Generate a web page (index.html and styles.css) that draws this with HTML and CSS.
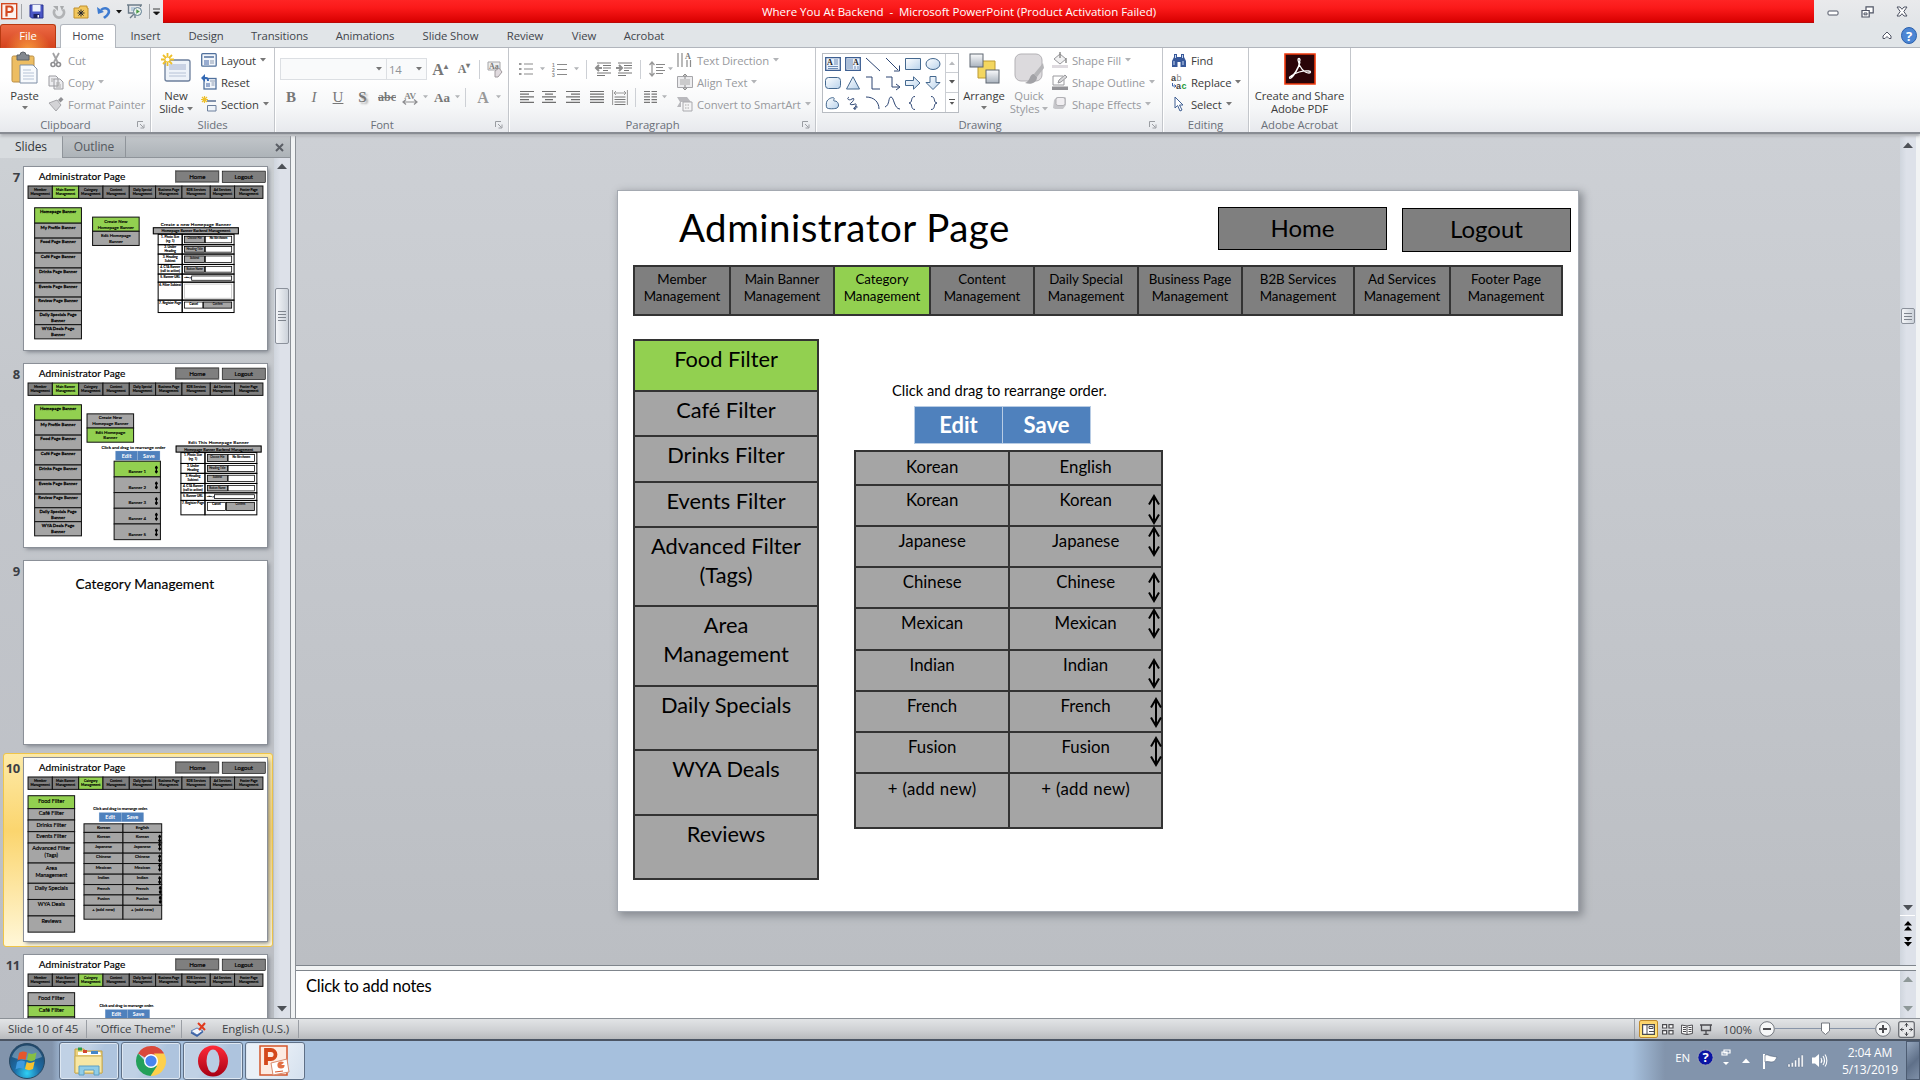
FILE: index.html
```html
<!DOCTYPE html>
<html lang="en">
<head>
<meta charset="utf-8">
<title>Where You At Backend - Microsoft PowerPoint</title>
<link rel="stylesheet" href="styles.css">
</head>
<body>
<svg class="sprite" width="0" height="0">
  <defs>
    <linearGradient id="blueFill" x1="0" y1="0" x2="1" y2="1"><stop offset="0" stop-color="#fff"/><stop offset="1" stop-color="#b9d3ec"/></linearGradient>
    <linearGradient id="greyFill" x1="0" y1="0" x2="0" y2="1"><stop offset="0" stop-color="#fafbfc"/><stop offset="1" stop-color="#a9b2bd"/></linearGradient>
    <radialGradient id="orb" cx=".5" cy=".85" r=".8"><stop offset="0" stop-color="#2fd0f5"/><stop offset=".45" stop-color="#1c6ca6"/><stop offset="1" stop-color="#21486c"/></radialGradient>
    <linearGradient id="operaRed" x1="0" y1="0" x2="0" y2="1"><stop offset="0" stop-color="#ff2a38"/><stop offset="1" stop-color="#a70014"/></linearGradient>
  </defs>
  <symbol id="tri" viewBox="0 0 6 4"><path d="M0 0h6L3 3.6z" fill="currentColor"/></symbol>
  <symbol id="launch" viewBox="0 0 8 8"><path d="M.5 6V.5H6M3 3l3.5 3.5M7 3.5V7H3.5" fill="none" stroke="currentColor"/></symbol>
  <symbol id="dragArrow" viewBox="0 0 12 31"><path class="drag-path" d="M6 2v27M1 10.500 6 2l5 8.500M1 20.500 6 29l5-8.500" fill="none" stroke="#000"/></symbol>
  <symbol id="lines" viewBox="0 0 14 12"><path d="M0 .5h14M0 3.200h9M0 5.900h14M0 8.600h9M0 11.300h14" stroke="#6f6f6f" stroke-width="1.200"/></symbol>
</svg>

<header class="titlebar">
  <div class="qat">
    <svg width="17" height="17" viewBox="0 0 17 17"><rect x=".7" y=".7" width="15" height="15" fill="#fdf3ee" stroke="#d2481f" stroke-width="1.400"/><path d="M5.500 13.500v-10h3.300a2.700 2.700 0 0 1 0 5.500H5.500" fill="none" stroke="#d2481f" stroke-width="2.200"/></svg>
    <i class="vbar"></i>
    <svg class="q-save" width="15" height="15" viewBox="0 0 15 15"><path d="M1 1h13v13H2.500L1 12.500z" fill="#4a56c6" stroke="#2b3590"/><path d="M3.500 1h8v6.500h-8z" fill="#eef2fb"/><path d="M4.500 10h6v4h-6z" fill="#1c2260"/><path d="M8.500 11h1.500v2.500H8.500z" fill="#fff"/></svg>
    <svg class="q-redo" width="14" height="14" viewBox="0 0 14 14"><path d="M3 4.500a5 5 0 1 0 8 0" fill="none" stroke="#b1b3b5" stroke-width="2.800"/><path d="M1 1h5v5zM8 1h4l-2 5z" fill="#a9abad"/></svg>
    <svg class="q-folder" width="16" height="14" viewBox="0 0 16 14"><path d="M1 3h5l1-2h7v2h1v10H1z" fill="#f2c75c" stroke="#c0902c"/><path d="M8 4.500v7M4.500 8h7M5.500 5.500l5 5M10.500 5.500l-5 5" stroke="#24272f"/></svg>
    <svg class="q-undo" width="14" height="14" viewBox="0 0 14 14"><path d="M4 5c5-4 10 0 7 4-1 2-3 3-4 4" fill="none" stroke="#3e7bd0" stroke-width="2.600"/><path d="M0 2l1 7 6-2z" fill="#3e7bd0"/></svg>
    <svg class="q-tri" width="6" height="4"><use href="#tri"/></svg>
    <svg class="q-show" width="16" height="15" viewBox="0 0 16 15"><path d="M0 1h15M1.500 1v8h5M13.500 1v2M7 10l-4 4M8 10v4" fill="none" stroke="#6e7d8a" stroke-width="1.400"/><path d="M4 4h4M4 6h3" stroke="#8fb3cf"/><circle cx="10.500" cy="7.500" r="4" fill="#e8f1ea" stroke="#5f7c92"/><path d="M9.300 5.200v4.600l3.500-2.300z" fill="#4b9a45"/></svg>
    <i class="vbar"></i>
    <svg class="q-more" width="7" height="8" viewBox="0 0 7 8"><path d="M0 1h7M.5 4h6L3.500 7z" fill="#111" stroke="#111" stroke-width=".8"/></svg>
  </div>
  <h1 class="caption">Where You At Backend&nbsp; -&nbsp; Microsoft PowerPoint (Product Activation Failed)</h1>
  <div class="winbtns">
    <svg width="12" height="12" viewBox="0 0 12 12"><rect x="1" y="5" width="10" height="4" rx="1" fill="#fff" stroke="#4f5464"/></svg>
    <svg width="13" height="12" viewBox="0 0 13 12"><path d="M5 .8h7.200v6H5z" fill="#fff" stroke="#4f5464" stroke-width="1.200"/><path d="M1 4.500h7.200v6.500H1z" fill="#fff" stroke="#4f5464" stroke-width="1.200"/><path d="M3 7h3v1.800H3z" fill="none" stroke="#4f5464"/></svg>
    <svg width="12" height="11" viewBox="0 0 12 11"><path d="M1 1h3l2 2.300L8 1h3L7.800 5.500 11 10H8L6 7.700 4 10H1l3.200-4.500z" fill="#fff" stroke="#4f5464"/></svg>
  </div>
</header>

<nav class="tabs">
  <span class="tab file">File</span><span></span><span class="tab active">Home</span><span class="tab">Insert</span><span class="tab">Design</span><span class="tab">Transitions</span><span class="tab">Animations</span><span class="tab">Slide Show</span><span class="tab">Review</span><span class="tab">View</span><span class="tab">Acrobat</span>
  <div class="tab-help">
    <svg width="10" height="9" viewBox="0 0 10 9"><path d="M1 7.500V5L5 1l4 4v2.500H7L5 5.500l-2 2z" fill="#fff" stroke="#4f5464"/></svg>
    <svg width="16" height="17" viewBox="0 0 16 17"><ellipse cx="8" cy="8.500" rx="7.500" ry="8" fill="#4c86d4" stroke="#2c61ad"/><text x="8" y="13.500" text-anchor="middle" class="q-mark">?</text></svg>
  </div>
</nav>

<section class="ribbon">
  <div class="group g-clip">
    <div class="tools">
      <div class="big"><svg width="28" height="32" viewBox="0 0 28 32"><rect x="1" y="3" width="22" height="26" rx="1.500" fill="#edbd62" stroke="#b98d45"/><path d="M6 2h3a3 3 0 0 1 6 0h3v5H6z" fill="#83888f" stroke="#5d6268"/><path d="M9 12h13l4 4v14H9z" fill="#f7fafd" stroke="#7f8fa6"/><path d="M12 17h8M12 20h11M12 23h11M12 26h11" stroke="#b6c3d6"/></svg><span>Paste</span><svg class="tri" width="6" height="4"><use href="#tri"/></svg></div>
      <div class="stack off">
        <div><svg width="16" height="16" viewBox="0 0 16 16"><path d="M5 1l5 10M11 1L6 10" stroke="#a2a2a4" stroke-width="1.800"/><circle cx="5" cy="12.500" r="2" fill="none" stroke="#8d8d90" stroke-width="1.600"/><circle cx="10.500" cy="12.500" r="2" fill="none" stroke="#8d8d90" stroke-width="1.600"/></svg><span>Cut</span></div>
        <div><svg width="16" height="16" viewBox="0 0 16 16"><path d="M1 2h7l2 2v8H1zM6 5h6l3 3v7H6z" fill="#ededf0" stroke="#9b9ba0"/><path d="M8 9h4M8 11h5M8 13h5M3 5h3M3 7h2" stroke="#aaa"/></svg><span>Copy</span><svg class="tri" width="6" height="4"><use href="#tri"/></svg></div>
        <div><svg width="16" height="16" viewBox="0 0 16 16"><path d="M10 4l3-3 2.500 2.500-3 3z" fill="#8f8f93"/><path d="M1 7l8-3 4 5-5 6z" fill="#d3d3d6" stroke="#a6a6aa"/></svg><span>Format Painter</span></div>
      </div>
    </div>
    <footer>Clipboard<svg width="8" height="8"><use href="#launch"/></svg></footer>
  </div>
  <div class="group g-slides">
    <div class="tools">
      <div class="big"><svg width="30" height="32" viewBox="0 0 30 32"><rect x="4" y="7" width="25" height="21" rx="2" fill="#eef3f9" stroke="#6c7f9c" stroke-width="1.300"/><path d="M8 11h17v6H8z" fill="#c9d2e4"/><path d="M8 20h17M8 23h17" stroke="#b6c2d6"/><path d="M6.500 0v13M0 6.500h13M2 2l9 9M11 2l-9 9" stroke="#eec02c" stroke-width="1.800"/><circle cx="6.500" cy="6.500" r="2" fill="#fff"/></svg><span>New</span><span>Slide <svg class="tri" width="6" height="4"><use href="#tri"/></svg></span></div>
      <div class="stack">
        <div><svg width="16" height="14" viewBox="0 0 16 14"><rect x=".7" y=".7" width="14.500" height="12.500" rx="1" fill="#f2f6fb" stroke="#50709c" stroke-width="1.300"/><path d="M3 3h10v2H3z" fill="#7b93b6"/><path d="M3 7h5v5H3z" fill="#98acd0"/><path d="M9 8h4M9 10h4" stroke="#8c9ab0"/></svg><span>Layout</span><svg class="tri" width="6" height="4"><use href="#tri"/></svg></div>
        <div><svg width="16" height="16" viewBox="0 0 16 16"><rect x="3" y="4.500" width="12" height="10.500" fill="#f2f6fb" stroke="#50709c" stroke-width="1.300"/><path d="M5 9h4v4H5z" fill="#98acd0"/><path d="M10.500 9h3M10.500 11h3M9 7h5" stroke="#8c9ab0"/><path d="M2 4h3c2 0 2 1 2 3" fill="none" stroke="#3469b4" stroke-width="2"/><path d="M0 4l4-4v8z" fill="#3469b4"/></svg><span>Reset</span></div>
        <div><svg width="16" height="16" viewBox="0 0 16 16"><path d="M6 5h9" stroke="#8292ac" stroke-width="2"/><path d="M6.500 9.500h8.500V15H6.500z" fill="#eef3f9" stroke="#6c7f9c"/><path d="M3.500 0v7M0 3.500h7M1 1l5 5M6 1L1 6" stroke="#eec02c" stroke-width="1.200"/></svg><span>Section</span><svg class="tri" width="6" height="4"><use href="#tri"/></svg></div>
      </div>
    </div>
    <footer>Slides</footer>
  </div>
  <div class="group g-font">
    <div class="tools rows">
      <div class="frow1">
        <div class="combo"><svg class="tri" width="6" height="4"><use href="#tri"/></svg></div>
        <div class="combo size"><span>14</span><svg class="tri" width="6" height="4"><use href="#tri"/></svg></div>
        <span class="ser f16">A<sup>▴</sup></span><span class="ser f13">A<sup>▾</sup></span><i class="vbar"></i>
        <svg width="16" height="17" viewBox="0 0 16 17"><path d="M1 1h12v8H1z" fill="#eee" stroke="#a5a5a8"/><text x="2" y="8" class="tinyc">Aa</text><path d="M8 10l4-3 3 4-4 5H8z" fill="#e0dade" stroke="#a09a9e"/></svg>
      </div>
      <div class="frow2">
        <b class="ser">B</b><i class="ser">I</i><u class="ser">U</u><b class="ser shade">S</b><s class="ser abc">abc</s>
        <svg width="17" height="15" viewBox="0 0 17 15"><text x="8" y="8.500" text-anchor="middle" class="av">AV</text><path d="M1 12h14M4 9.500L1 12l3 2.500M12 9.500l3 2.500-3 2.500" fill="none" stroke="#8d8d90" stroke-width="1.200"/></svg>
        <svg class="tri" width="5" height="4"><use href="#tri"/></svg><span class="ser aa">Aa</span><svg class="tri" width="5" height="4"><use href="#tri"/></svg><i class="vbar"></i><span class="ser acol">A</span><svg class="tri" width="5" height="4"><use href="#tri"/></svg>
      </div>
    </div>
    <footer>Font<svg width="8" height="8"><use href="#launch"/></svg></footer>
  </div>
  <div class="group g-para">
    <div class="tools">
      <div class="rows">
        <div class="prow1">
          <svg width="14" height="14" viewBox="0 0 14 14"><path d="M5 2h9M5 7h9M5 12h9" stroke="#8a8a8a"/><path d="M0 1h2.500v2H0zM0 6h2.500v2H0zM0 11h2.500v2H0z" fill="#9a9a9a"/></svg><svg class="tri" width="5" height="4"><use href="#tri"/></svg>
          <svg width="15" height="15" viewBox="0 0 15 15"><path d="M5 2.500h10M5 7.500h10M5 12.500h10" stroke="#8a8a8a"/><text y="4.500" class="num">1</text><text y="9.500" class="num">2</text><text y="14.500" class="num">3</text></svg><svg class="tri" width="5" height="4"><use href="#tri"/></svg>
          <i class="vbar"></i>
          <svg width="16" height="14" viewBox="0 0 16 14"><path d="M2 1h14M8 3.500h8M8 6h8M8 8.500h5M2 11h14M2 13.500h8" stroke="#777"/><path d="M7 6H1M4 3L1 6l3 3" fill="none" stroke="#8f8f8f" stroke-width="2"/></svg>
          <svg width="16" height="14" viewBox="0 0 16 14"><path d="M2 1h14M8 3.500h8M8 6h8M8 8.500h5M2 11h14M2 13.500h8" stroke="#777"/><path d="M0 6h6M3 3l3 3-3 3" fill="none" stroke="#8f8f8f" stroke-width="2"/></svg>
          <i class="vbar"></i>
          <svg width="16" height="16" viewBox="0 0 16 16"><path d="M7 3.500h9M7 6.500h7M7 9.500h9M7 12.500h7" stroke="#888"/><path d="M3 1v14M.5 4L3 1l2.500 3M.5 12L3 15l2.500-3" fill="none" stroke="#999" stroke-width="1.300"/></svg><svg class="tri" width="5" height="4"><use href="#tri"/></svg>
        </div>
        <div class="prow2">
          <svg width="14" height="12"><use href="#lines"/></svg>
          <svg width="14" height="12" viewBox="0 0 14 12"><path d="M0 .5h14M3 3.200h8M0 5.900h14M3 8.600h8M0 11.300h14" stroke="#6f6f6f" stroke-width="1.200"/></svg>
          <svg width="14" height="12" viewBox="0 0 14 12"><path d="M0 .5h14M5 3.200h9M0 5.900h14M5 8.600h9M0 11.300h14" stroke="#6f6f6f" stroke-width="1.200"/></svg>
          <svg width="14" height="12" viewBox="0 0 14 12"><path d="M0 .5h14M0 3.200h14M0 5.900h14M0 8.600h14M0 11.300h14" stroke="#6f6f6f" stroke-width="1.200"/></svg>
          <svg width="16" height="15" viewBox="0 0 16 15"><path d="M.6 0v15M15.400 0v15" stroke="#999"/><path d="M2 3h12M4 1L2 3l2 2M12 1l2 2-2 2" fill="none" stroke="#999"/><path d="M2.500 7h11M2.500 9.500h11M2.500 12h11M2.500 14.500h11" stroke="#777"/></svg>
          <i class="vbar"></i>
          <svg width="13" height="12" viewBox="0 0 13 12"><path d="M0 .5h6M7.500.5H13M0 3.200h6M7.500 3.200H13M0 5.900h6M7.500 5.900H13M0 8.600h6M7.500 8.600H13M0 11.300h6M7.500 11.300H13" stroke="#777" stroke-width="1.200"/></svg><svg class="tri" width="5" height="4"><use href="#tri"/></svg>
        </div>
      </div>
      <div class="stack off">
        <div><svg width="16" height="16" viewBox="0 0 16 16"><path d="M1 1v14M5 1v14M10 8v7M13.500 8v7" stroke="#8c8c8c" stroke-width="1.200"/><text x="8" y="7" class="tinyc">A</text></svg><span>Text Direction</span><svg class="tri" width="6" height="4"><use href="#tri"/></svg></div>
        <div><svg width="16" height="16" viewBox="0 0 16 16"><path d="M.5 2.500h15v11H.5z" fill="#ececee" stroke="#a6a6aa"/><path d="M3 6h10M3 8h10M3 10h10" stroke="#aaa"/><path d="M8 0v5M8 16v-5M6 2l2-2 2 2M6 14l2 2 2-2" fill="none" stroke="#8c8c8c"/></svg><span>Align Text</span><svg class="tri" width="6" height="4"><use href="#tri"/></svg></div>
        <div><svg width="16" height="16" viewBox="0 0 16 16"><path d="M0 1h10l4 5H4v5H0l3-5z" fill="#b9b9bd"/><path d="M6 6h9v9H6z" fill="#f4f4f5" stroke="#a9a9ad"/><path d="M8 9h5M8 12h5" stroke="#aaa" stroke-dasharray="1.500 1"/></svg><span>Convert to SmartArt</span><svg class="tri" width="6" height="4"><use href="#tri"/></svg></div>
      </div>
    </div>
    <footer>Paragraph<svg width="8" height="8"><use href="#launch"/></svg></footer>
  </div>
  <div class="group g-draw">
    <div class="tools">
      <div class="gallery">
        <div class="shapes">
          <svg viewBox="0 0 16 14"><path class="box" d="M.7.7h14.600v12.600H.7z"/><path d="M9 3h4M9 5h4M9 7h4M3 9.500h10M3 11.500h10" stroke="#6d8cb8"/><text x="2" y="8" class="tinyb">A</text></svg>
          <svg viewBox="0 0 16 14"><path class="box" d="M.7.7h14.600v12.600H.7z"/><path d="M3 2v10M5 2v10M7 2v10M10 9v3M13 9v3" stroke="#6d8cb8"/><text x="8" y="8" class="tinyb">A</text></svg>
          <svg viewBox="0 0 16 14"><path d="M1 1l14 13"/></svg>
          <svg viewBox="0 0 16 14"><path d="M1 1l12 12M14.500 8.500v5.500H9"/></svg>
          <svg viewBox="0 0 16 14"><path class="fl" d="M.5 1.500h15v11H.5z"/></svg>
          <svg viewBox="0 0 16 14"><ellipse class="fl" cx="8" cy="7" rx="7" ry="5.500"/></svg>
          <svg viewBox="0 0 16 14"><rect class="fl" x=".5" y="1.500" width="15" height="11" rx="3"/></svg>
          <svg viewBox="0 0 16 14"><path class="fl" d="M8 .8L14.500 13h-13z"/></svg>
          <svg viewBox="0 0 16 14"><path d="M1 1h6v12h8"/></svg>
          <svg viewBox="0 0 16 14"><path d="M1 1h6v10h7M11 8l4 3-4 3"/></svg>
          <svg viewBox="0 0 16 14"><path class="fl" d="M.5 4.500h8V.8L15 7l-6.500 6.200V9.500h-8z"/></svg>
          <svg viewBox="0 0 16 14"><path class="fl" d="M5 .5h6v6h4L8 13.500 1 6.500h4z"/></svg>
          <svg viewBox="0 0 16 14"><path class="fl" d="M2 5c2-3 6-4 7-3s-2 3 1 3 5 5 2 7c-2 1-9 1-10 0s-1-5 0-7z"/></svg>
          <svg viewBox="0 0 16 14"><path d="M4 1c-3 2 0 4 3 2s2 2-1 4 2 2 4 1 1 3-1 4 3 1 3-1-3 0-2 3"/></svg>
          <svg viewBox="0 0 16 14"><path d="M1 1c8 0 13 5 13 12"/></svg>
          <svg viewBox="0 0 16 14"><path d="M0 11C5 9 3 1 6 1s3 12 9 12"/></svg>
          <svg viewBox="0 0 16 14"><path d="M10 .5C5 .5 8 7 4 7c4 0 1 6.500 6 6.500"/></svg>
          <svg viewBox="0 0 16 14"><path d="M6 .5C11 .5 8 7 12 7 8 7 11 13.500 6 13.500"/></svg>
        </div>
        <div class="gscroll"><span class="dim"><svg width="6" height="4"><use href="#tri"/></svg></span><span><svg width="6" height="4"><use href="#tri"/></svg></span><span class="more"><svg width="6" height="4"><use href="#tri"/></svg></span></div>
      </div>
      <div class="big arrange"><svg width="31" height="32" viewBox="0 0 31 32"><path d="M9 8h17v17H9z" fill="#f3d65f" stroke="#bd9a33"/><rect x="1" y="1" width="13" height="13" fill="url(#greyFill)" stroke="#5e6670"/><rect x="17" y="17" width="13" height="13" fill="url(#greyFill)" stroke="#5e6670"/></svg><span>Arrange</span><svg class="tri" width="6" height="4"><use href="#tri"/></svg></div>
      <div class="big off quick"><svg width="30" height="32" viewBox="0 0 30 32"><rect x="1" y="1" width="27" height="27" rx="6" fill="#dcdadd" stroke="#b3b1b5"/><path d="M29 10l-9 11 3 3 7-9z" fill="#b5b5b8"/><path d="M20 21c-5 0-3 7-9 9 6 2 12 0 12-6z" fill="#a2a2a6"/></svg><span>Quick</span><span>Styles <svg class="tri" width="6" height="4"><use href="#tri"/></svg></span></div>
      <div class="stack off">
        <div><svg width="16" height="16" viewBox="0 0 16 16"><path d="M2 7l6-5 6 5-6 5z" fill="#f1f1f2" stroke="#97979b"/><path d="M8 0v6M14 6v5" stroke="#888" stroke-width="1.400"/><path d="M0 13h16v3H0z" fill="#dedadf"/></svg><span>Shape Fill</span><svg class="tri" width="6" height="4"><use href="#tri"/></svg></div>
        <div><svg width="16" height="16" viewBox="0 0 16 16"><path d="M11 2H1v9h11V6" fill="none" stroke="#9a9a9e"/><path d="M6 9l1-3 6-5 2 2-6 5z" fill="#d8d8da" stroke="#97979b"/><path d="M0 12.500h16V16H0z" fill="#929296"/></svg><span>Shape Outline</span><svg class="tri" width="6" height="4"><use href="#tri"/></svg></div>
        <div><svg width="16" height="16" viewBox="0 0 16 16"><path d="M2 4l3-3h8l1 1v7l-3 4H3l-2-1z" fill="#c6c6ca"/><rect x="4" y="1.500" width="9" height="8" rx="2" fill="#f0eef1" stroke="#b0b0b4"/></svg><span>Shape Effects</span><svg class="tri" width="6" height="4"><use href="#tri"/></svg></div>
      </div>
    </div>
    <footer>Drawing<svg width="8" height="8"><use href="#launch"/></svg></footer>
  </div>
  <div class="group g-edit">
    <div class="tools">
      <div class="stack">
        <div><svg width="16" height="15" viewBox="0 0 16 15"><path d="M3 1h3v3h4V1h3v3l2 4v6H9.500V9h-3v5H1V8l2-4z" fill="#37589a"/><path d="M3 8v4M12 8v4M4.500 2v3M11.500 2v3" stroke="#c9d8f0"/></svg><span>Find</span></div>
        <div><svg width="16" height="16" viewBox="0 0 16 16"><text x="0" y="7" class="rep1">a</text><text x="5.500" y="7" class="rep2">b</text><text x="5" y="15" class="rep1">a</text><text x="10.500" y="15" class="rep3">c</text><path d="M1.500 9v3H5M3.500 10.500L5 12l-1.500 1.500" fill="none" stroke="#3c62a8"/></svg><span>Replace</span><svg class="tri" width="6" height="4"><use href="#tri"/></svg></div>
        <div><svg width="16" height="16" viewBox="0 0 16 16"><path d="M4 1v11l2.600-2.500L9 15l2-1-2.500-5H12z" fill="#fff" stroke="#3f5f93"/></svg><span>Select</span><svg class="tri" width="6" height="4"><use href="#tri"/></svg></div>
      </div>
    </div>
    <footer>Editing</footer>
  </div>
  <div class="group g-acro">
    <div class="tools">
      <div class="big"><svg width="32" height="32" viewBox="0 0 32 32"><path d="M1 1h30v30H1z" fill="#2a0408" stroke="#f0380c" stroke-width="1.600"/><path d="M6 24c3-1 9-8 10-17 0-2-2-2-2 0 1 7 6 13 11 13 2 0 2-2 0-2-6-1-14 2-18 5-2 1-2 3 0 2 3-2 8-11 9-16" fill="none" stroke="#fff" stroke-width="1.300"/></svg><span>Create and Share</span><span>Adobe PDF</span></div>
    </div>
    <footer>Adobe Acrobat</footer>
  </div>
</section>

<main class="work">
  <aside class="pane">
    <div class="ptabs"><span class="on">Slides</span><span>Outline</span><svg width="9" height="9" viewBox="0 0 9 9"><path d="M1 1l7 7M8 1L1 8" stroke="#5b5f66" stroke-width="2"/></svg></div>
    <div class="plist">
      <ol class="thumbs">
        <li><b>7</b><div class="thumb" data-slide="banner-create"></div></li>
        <li><b>8</b><div class="thumb" data-slide="banner-edit"></div></li>
        <li><b>9</b><div class="thumb" data-slide="divider"></div></li>
        <li class="sel"><b>10</b><div class="thumb" data-slide="food"></div></li>
        <li><b>11</b><div class="thumb" data-slide="cafe"></div></li>
      </ol>
      <div class="vscroll"><svg width="10" height="6" viewBox="0 0 10 6"><path d="M0 6h10L5 .5z" fill="#4d5157"/></svg><i class="knob"></i><svg width="10" height="6" viewBox="0 0 10 6"><path d="M0 0h10L5 5.500z" fill="#4d5157"/></svg></div>
    </div>
  </aside>
  <div class="editor">
    <div class="canvas-row">
      <div class="canvas">
        <article class="slide" id="current">
          <div class="s-head"><h2>Administrator Page</h2><span class="btn">Home</span><span class="btn lower">Logout</span></div>
          <div class="s-nav"><span>Member<br>Management</span><span>Main Banner<br>Management</span><span class="on">Category<br>Management</span><span>Content<br>Management</span><span>Daily Special<br>Management</span><span>Business Page<br>Management</span><span>B2B Services<br>Management</span><span>Ad Services<br>Management</span><span>Footer Page<br>Management</span></div>
          <div class="s-body">
            <div class="s-side"><span class="on">Food Filter</span><span>Café Filter</span><span>Drinks Filter</span><span>Events Filter</span><span>Advanced Filter<br>(Tags)</span><span>Area<br>Management</span><span>Daily Specials</span><span>WYA Deals</span><span>Reviews</span></div>
            <div class="s-main">
              <p>Click and drag to rearrange order.</p>
              <div class="pair"><b>Edit</b><b>Save</b></div>
              <div class="words">
                <span class="wh">Korean</span><span class="wh">English</span>
                <span>Korean</span><span>Korean<svg class="a1"><use href="#dragArrow"/></svg></span>
                <span>Japanese</span><span>Japanese<svg class="a2"><use href="#dragArrow"/></svg></span>
                <span>Chinese</span><span>Chinese<svg class="a3"><use href="#dragArrow"/></svg></span>
                <span>Mexican</span><span>Mexican<svg class="a4"><use href="#dragArrow"/></svg></span>
                <span>Indian</span><span>Indian<svg class="a5"><use href="#dragArrow"/></svg></span>
                <span>French</span><span>French<svg class="a6"><use href="#dragArrow"/></svg></span>
                <span>Fusion</span><span>Fusion<svg class="a7"><use href="#dragArrow"/></svg></span>
                <span class="add">+ (add new)</span><span class="add">+ (add new)</span>
              </div>
            </div>
          </div>
        </article>
      </div>
      <div class="vscroll wide"><svg width="10" height="6" viewBox="0 0 10 6"><path d="M0 6h10L5 .5z" fill="#4d5157"/></svg><i class="knob"></i><svg width="10" height="6" viewBox="0 0 10 6"><path d="M0 0h10L5 5.500z" fill="#4d5157"/></svg><div class="jump"><svg width="8" height="10" viewBox="0 0 8 10"><path d="M0 4.500h8L4 0zM0 9.500h8L4 5z"/></svg><svg width="8" height="10" viewBox="0 0 8 10"><path d="M0 0h8L4 4.500zM0 5h8L4 9.500z"/></svg></div></div>
    </div>
    <div class="notes-row"><div class="notes">Click to add notes</div><div class="vscroll faded"><svg width="10" height="6" viewBox="0 0 10 6"><path d="M0 6h10L5 .5z" fill="#8e9898"/></svg><svg width="10" height="6" viewBox="0 0 10 6"><path d="M0 0h10L5 5.500z" fill="#8e9898"/></svg></div></div>
  </div>
</main>

<footer class="status">
  <span class="st1">Slide 10 of 45</span><span class="st2">"Office Theme"</span>
  <span class="st3"><svg width="17" height="15" viewBox="0 0 17 15"><path d="M1 9l6-3 6 3-6 4z" fill="#f3f6fb" stroke="#5d7fb8"/><path d="M1 10.500l6 3.500 6-4.500" fill="none" stroke="#3b62a6" stroke-width="1.500"/><path d="M8 1l7 7M15 1L9 8" stroke="#e03a1e" stroke-width="2"/></svg></span><span class="st4">English (U.S.)</span>
  <div class="views">
    <i class="cur"><svg width="13" height="11" viewBox="0 0 13 11"><path d="M.6.6h11.800v9.800H.6z" fill="#fff" stroke="#4c4c50" stroke-width="1.200"/><path d="M5 0v11M7 2.500h4v2H7zM7 7.500h5" fill="none" stroke="#4c4c50"/></svg></i>
    <svg width="12" height="11" viewBox="0 0 12 11"><path d="M.6.6h4v3.400h-4zM7 .6h4v3.400H7zM.6 6.600h4V10h-4zM7 6.600h4V10H7z" fill="#fff" stroke="#4c4c50" stroke-width="1.200"/></svg>
    <svg width="12" height="11" viewBox="0 0 12 11"><path d="M.6 1L6 2l5.400-1v8.500L6 10.500.6 9.500zM6 2v8.500M2 3.500h3M2 5.500h3M2 7.500h3M7.500 3.500h3M7.500 5.500h3M7.500 7.500h3" fill="#fff" stroke="#4c4c50"/></svg>
    <svg width="12" height="11" viewBox="0 0 12 11"><path d="M0 1h12M1.500 1v5.500h9V1M6 6.500V10M3.500 10.300h5" fill="none" stroke="#4c4c50" stroke-width="1.300"/></svg>
    <span class="pct">100%</span>
    <svg class="zoomer" width="132" height="18" viewBox="0 0 132 18"><path d="M16 8.500h100" stroke="#8995a8"/><circle cx="8" cy="9" r="7.300" fill="#f6f7f8" stroke="#73777e"/><path d="M4 9h8" stroke="#4c4c50" stroke-width="2"/><circle cx="124" cy="9" r="7.300" fill="#f6f7f8" stroke="#73777e"/><path d="M120 9h8M124 5v8" stroke="#4c4c50" stroke-width="2"/><path d="M62.500 3h8v8l-4 3.500-4-3.500z" fill="#fff" stroke="#73777e"/></svg>
    <svg width="17" height="17" viewBox="0 0 17 17"><rect x=".7" y=".7" width="15.600" height="15.600" rx="2" fill="#e6e7e9" stroke="#6c6f75" stroke-width="1.300"/><path d="M8.500 2v4M8.500 11v4M2 8.500h4M11 8.500h4M7 4.500l1.500-2 1.500 2M7 12.500l1.500 2 1.500-2M4.500 7l-2 1.500 2 1.500M12.500 7l2 1.500-2 1.500" fill="none" stroke="#45474c"/></svg>
  </div>
</footer>

<div class="taskbar">
  <svg class="orb" width="38" height="38" viewBox="0 0 38 38"><circle cx="19" cy="19" r="17.500" fill="url(#orb)" stroke="#274862"/><path d="M4 15A15.500 15.500 0 0 1 34 15C25 19 13 19 4 15z" fill="#b5cbdc" opacity=".45"/><path d="M11 11c3-2 5-2 8-.5l-1.500 7.500c-3-1.500-5-1-8 .5z" fill="#e4572c"/><path d="M20.500 11c3 1.500 5 1 8-.5L27 18c-3 1.500-5 1.500-8 0z" fill="#86bf44"/><path d="M9 20c3-1.500 5-2 8-.5L15.500 27c-3-1.500-5-1-8 .5z" fill="#3f9ade"/><path d="M18.700 20c3 1.500 5 1 8-.5L25 27c-3 1.500-5 1.500-8 0z" fill="#f6c22f"/></svg>
  <div class="tb"><svg width="34" height="34" viewBox="0 0 34 34"><path d="M3 5h9l1 2h17v22H3z" fill="#ecd380" stroke="#c2a042"/><path d="M6 8h22l1 3H6z" fill="#fff"/><path d="M6 3.500h4v3H6z" fill="#2c9c48"/><path d="M11 6h4v3h-4z" fill="#d3452f"/><path d="M19 7h7v3h-7z" fill="#4386c8"/><path d="M3 12h27v17H3z" fill="#f7e7a4" stroke="#ccae55"/><path d="M7 31v-9h20v9h-5v-5H12v5z" fill="#8fcde8" stroke="#5d9fc4"/></svg></div>
  <div class="tb"><svg width="32" height="32" viewBox="0 0 32 32"><path d="M16 16L3 8.500A15 15 0 0 1 29 8.500z" fill="#d9483b"/><path d="M16 1a15 15 0 0 1 13 7.500H16z" fill="#d9483b"/><path d="M29 8.500A15 15 0 0 1 15.500 31L22 16l-3-7.500z" fill="#fdd04c"/><path d="M3 8.500A15 15 0 0 0 15.500 31l6.500-10L10 16z" fill="#23a05a"/><circle cx="16" cy="16" r="7" fill="#fff"/><circle cx="16" cy="16" r="5.600" fill="#4a85ee"/></svg></div>
  <div class="tb"><svg width="32" height="32" viewBox="0 0 32 32"><ellipse cx="16" cy="16" rx="15" ry="15.500" fill="url(#operaRed)"/><ellipse cx="16" cy="16" rx="6.500" ry="11.500" fill="#b9cde4"/></svg></div>
  <div class="tb front"><svg width="32" height="32" viewBox="0 0 32 32"><rect x="2" y="1" width="27" height="29" fill="#fdebe2" stroke="#d4552b" stroke-width="1.500"/><path d="M8 20V5h5a4.500 4.500 0 0 1 0 9H8" fill="none" stroke="#d4481b" stroke-width="3.800"/><path d="M13 18l16-4 2 13-16 3z" fill="#fff" stroke="#d98b6e"/><circle cx="23" cy="20" r="3.600" fill="#e26f45"/><path d="M23 20h4v-3z" fill="#fff"/><path d="M17 27l8-1" stroke="#d4552b"/></svg></div>
  <div class="tray">
    <span class="en">EN</span>
    <svg class="t-help" width="17" height="17" viewBox="0 0 17 17"><circle cx="8.500" cy="8.500" r="7.700" fill="#0a15a4" stroke="#9fa6b4"/><text x="8.500" y="13" text-anchor="middle" class="q-mark">?</text></svg>
    <svg class="t-win" width="10" height="18" viewBox="0 0 10 18"><path d="M3 1h6v3H3zM1 3h5v3H1z" fill="#8294ae" stroke="#fff" stroke-width="1.200"/><path d="M2 13h6l-3 3z" fill="#fff"/></svg>
    <svg class="t-up" width="8" height="6" viewBox="0 0 8 6"><path d="M0 5h8L4 .5z" fill="#fff"/></svg>
    <svg class="t-flag" width="16" height="16" viewBox="0 0 16 16"><path d="M2 1v15" stroke="#fff" stroke-width="2"/><path d="M3 2c3-1 4 1 6 1l6 1c-1 2-2 5-5 5S6 8 3 9z" fill="#fff" stroke="#4f6078" stroke-width=".6"/></svg>
    <svg class="t-sig" width="17" height="13" viewBox="0 0 17 13"><path d="M1 10h2v3H1zM4.300 8.500h2V13h-2zM7.600 6h2v7h-2zM10.900 3.500h2V13h-2zM14.200 1h2v12h-2z" fill="#fff" stroke="#5b6c85" stroke-width=".4"/></svg>
    <svg class="t-snd" width="17" height="15" viewBox="0 0 17 15"><path d="M1 4.500h3L8 1v13l-4-3.500H1z" fill="#fff"/><path d="M10 5c1 1.500 1 3.500 0 5M12 3c2 3 2 6 0 9M14 1.500c2.500 3.500 2.500 8.500 0 12" fill="none" stroke="#fff" stroke-width="1.100"/></svg>
    <div class="clock"><span>2:04 AM</span><span>5/13/2019</span></div>
    <i class="peek"></i>
  </div>
</div>

<template id="tpl-banner-side"><div class="bn-side"><span class="on">Homepage Banner</span><span>My Profile Banner</span><span>Food Page Banner</span><span>Café Page Banner</span><span>Drinks Page Banner</span><span>Events Page Banner</span><span>Review Page Banner</span><span>Daily Specials Page Banner</span><span>WYA Deals Page Banner</span></div></template>
<template id="tpl-form"><div class="bn-form"><p></p><h4>Homepage Banner Backend Management</h4><div class="rowsf">
  <span>1. Photo Size (eg. 1)</span><div><em>Choose File</em><q>No file chosen</q></div>
  <span>2. Under Heading</span><div><em>Heading Title</em><q></q></div>
  <span>3. Heading Subtext</span><div><em>Subtext</em><q></q></div>
  <span>4. CTA Banner (call to action)</span><div><em>Button Name</em><q></q></div>
  <span>5. Banner URL</span><div><small>http://</small><q></q></div>
  <span class="opt">6. Filter Subtext</span><div class="opt area"><q></q></div>
  <span>7. Register Page</span><div class="end"><q>Cancel</q><em>Confirm</em></div>
</div></div></template>
<script src="slides.js"></script>
</body>
</html>
```
FILE: slides.js
```js
// Fills the slide pane: every thumbnail reuses the markup of the open slide.
const current = document.getElementById('current');
const tpl = id => document.getElementById(id).content.firstElementChild.cloneNode(true);
const copy = () => { const s = current.cloneNode(true); s.removeAttribute('id'); return s; };
const mark = (box, i) => [...box.children].forEach((c, n) => c.classList.toggle('on', n === i));
const el = (cls, html) => { const d = document.createElement('div'); d.className = cls; d.innerHTML = html; return d; };

function banner(editing) {
  const s = copy();
  mark(s.querySelector('.s-nav'), 1);
  const body = s.querySelector('.s-body');
  body.replaceChildren(tpl('tpl-banner-side'));
  body.classList.add('bn', editing ? 'bn-editing' : 'bn-creating');
  const mid = el('bn-mid', '');
  const pick = el('bn-pick', '<span>Create New Homepage Banner</span><span>Edit Homepage Banner</span>');
  mark(pick, editing ? 1 : 0);
  mid.append(pick);
  if (editing) {
    mid.append(el('bn-drag', 'Click and drag to rearrange order'),
      el('pair', '<b>Edit</b><b>Save</b>'),
      el('bn-list', [1, 2, 3, 4, 5].map(n => `<span>Banner ${n}<svg><use href="#dragArrow"/></svg></span>`).join('')));
    mark(mid.querySelector('.bn-list'), 0);
  }
  const form = tpl('tpl-form');
  form.querySelector('p').textContent = editing ? 'Edit This Homepage Banner' : 'Create a new Homepage Banner';
  if (editing) form.querySelectorAll('.opt').forEach(o => o.remove());
  body.append(mid, form);
  return s;
}

const make = {
  'banner-create': () => banner(false),
  'banner-edit': () => banner(true),
  divider: () => el('slide divider', '<h3>Category Management</h3>'),
  food: copy,
  cafe: () => { const s = copy(); mark(s.querySelector('.s-side'), 1); s.querySelector('.s-main').classList.add('shifted'); return s; }
};
document.querySelectorAll('.thumb').forEach(t => t.append(make[t.dataset.slide]()));
```
FILE: styles.css
```css
* { box-sizing: border-box; }
body { margin: 0; width: 1920px; height: 1080px; overflow: hidden; display: flex; flex-direction: column; font: 11.300px/13px "Open Sans", "Noto Sans", sans-serif; letter-spacing: -.1px; color: #3b3b3b; background: #e1e5e8; }
svg { display: block; flex: none; overflow: visible; }
.sprite { position: absolute; }
h1, h2, h3, h4, p, ol { margin: 0; padding: 0; font-weight: 400; }
.drag-path { stroke-width: var(--arrow, 2); }

/* Title bar */
.titlebar { height: 23px; display: flex; background: linear-gradient(#e9eaec, #e2e5e8); flex: none; }
.qat { width: 163px; display: flex; align-items: center; padding-left: 1px; }
.vbar { width: 1px; height: 15px; background: #a2a5a9; display: block; }
.qat .vbar { margin-left: 3px; }
.q-save { margin-left: 7px; }
.q-redo { margin-left: 8px; }
.q-folder { margin-left: 7px; }
.q-undo { margin-left: 8px; }
.q-tri { margin-left: 5px; color: #111; }
.q-show { margin-left: 5px; }
.q-show + .vbar { margin-left: 6px; }
.q-more { margin-left: 3px; }
.caption { flex: 1; background: linear-gradient(#ff2424, #fb1a1a 35%, #d80000); border-bottom: 1px solid #b90808; color: #fff; text-align: center; font-size: 11.500px; line-height: 24px; padding-right: 59px; letter-spacing: -.02px; }
.winbtns { width: 106px; display: flex; align-items: center; padding-left: 13px; gap: 22px; }

/* Ribbon tabs */
.tabs { height: 25px; flex: none; display: grid; grid-template-columns: 56px 4px 56px 59px 62px 85px 86px 85px 64px 54px 66px 1fr; background: #e1e5e8; border-bottom: 1px solid #b1b6bd; padding-top: 1px; }
.tab { text-align: center; line-height: 24px; color: #42464c; }
.tab.file { background: radial-gradient(ellipse at 50% 110%, #f89b3c, transparent 60%), linear-gradient(#ec6a45, #d4421c); color: #fff; border: 1px solid #b73a12; border-radius: 3px 3px 0 0; border-bottom: 0; line-height: 22px; }
.tab.active { background: #fff; border: 1px solid #b1b6bd; border-bottom: 0; border-radius: 3px 3px 0 0; margin-bottom: -1px; line-height: 22px; }
.tab-help { display: flex; justify-content: flex-end; align-items: center; gap: 9px; padding-right: 3px; padding-bottom: 2px; }
.q-mark { font: bold 13px "Open Sans", sans-serif; fill: #fff; }

/* Ribbon */
.ribbon { height: 86px; flex: none; display: flex; background: linear-gradient(#fff 35%, #f6f7f8 70%, #e7e9ed); border-bottom: 2px solid #888c93; box-shadow: 0 2px 3px #a9acb1; position: relative; }
.group { border-right: 1px solid #c3c6cb; display: flex; flex-direction: column; box-shadow: 1px 0 #fff; }
.tools { flex: 1; display: flex; padding-top: 3px; }
.group footer { height: 17px; text-align: center; color: #6a7079; display: flex; align-items: center; justify-content: center; position: relative; padding-top: 1px; }
.group footer svg { position: absolute; right: 5px; bottom: 3px; color: #9a9da2; }
.g-clip { width: 151px; } .g-slides { width: 124px; } .g-font { width: 234px; } .g-para { width: 307px; } .g-draw { width: 347px; } .g-edit { width: 86px; } .g-acro { width: 102px; }
.g-clip footer, .g-font footer, .g-para footer, .g-draw footer { padding-right: 19px; }
.g-draw footer { padding-right: 18px; }
.off { color: #97999d; }
.tri { color: #777; display: inline-block; }
.off .tri, .frow2 .tri, .prow1 .tri, .prow2 .tri { color: #b2b4b7; }
.big { display: flex; flex-direction: column; align-items: center; white-space: nowrap; padding-top: 2px; }
.big > svg:first-child { margin-bottom: 4px; }
.big > .tri { margin-top: 4px; }
.big .tri { vertical-align: 2px; }
.stack { display: flex; flex-direction: column; margin-top: -2px; }
.stack > div { display: flex; align-items: center; height: 22px; white-space: nowrap; }
.stack > div > span { margin-left: 4px; }
.stack > div > .tri { margin-left: 4px; }
.g-clip .big { width: 49px; } .g-clip .stack { margin-left: -1px; }
.g-slides .big { width: 50px; } .g-slides .stack { margin-left: 0; }
.rows { display: flex; flex-direction: column; }
.frow1 { display: grid; grid-template-columns: 107px 40px 26px 22px 9px 22px; margin: 7px 0 0 5px; height: 22px; align-items: center; justify-items: center; }
.combo { width: 107px; height: 22px; border: 1px solid #dcdfe3; background: #f9fafb; display: flex; align-items: center; justify-content: flex-end; padding-right: 4px; color: #8f9297; }
.combo.size { width: 40px; border-left: 0; justify-content: space-between; padding-left: 2px; }
.ser { font-family: "Liberation Serif", serif; color: #777; font-size: 15px; letter-spacing: 0; }
.f16 { font-size: 16px; font-weight: bold; white-space: nowrap; } .f13 { font-size: 12px; font-weight: bold; white-space: nowrap; }
.ser sup { font-size: 8px; line-height: 0; }
.shade { text-shadow: 2px 2px 2px #aaa; }
.abc { font-size: 12px; font-weight: bold; }
.av { font: bold 9px "Liberation Serif", serif; fill: #888; }
.aa { font-weight: bold; font-size: 13px; } .acol { font-size: 16px; font-weight: bold; color: #999; }
.tinyc { font: bold 8px "Liberation Serif", serif; fill: #777; } .tinyb { font: bold 8px "Liberation Serif", serif; fill: #222; }
.num { font: bold 5px "Liberation Sans", sans-serif; fill: #888; }
.rep1 { font: bold 9px "Liberation Sans", sans-serif; fill: #444; } .rep2 { font: 9px "Liberation Sans", sans-serif; fill: #888; } .rep3 { font: bold 9px "Liberation Sans", sans-serif; fill: #1e9a3a; }
.frow2 { display: grid; grid-template-columns: 22px 24px 24px 25px 24px 23px 7px 26px 4px 13px 22px 8px; margin: 7px 0 0 5px; height: 20px; align-items: center; justify-items: center; }
.rows .vbar { background: #cdd0d5; height: 19px; }
.prow1 { display: grid; grid-template-columns: 18px 14px 20px 14px 6px 29px 14px 16px 18px 8px; margin: 7px 0 0 8px; height: 22px; align-items: center; justify-items: center; }
.prow2 { display: grid; grid-template-columns: 20px 24px 24px 24px 22px 8px 24px 4px; margin: 7px 0 0 8px; height: 20px; align-items: center; justify-items: center; }
.prow1 > svg:nth-of-type(5), .prow1 > svg:nth-of-type(6) { margin-right: 2px; }
.prow2 > svg { margin-right: 1px; }
.g-para .stack { margin-left: 3px; width: 140px; }
.g-para .tools > .rows { width: 166px; }
.gallery { width: 137px; height: 60px; margin: 2px 0 0 6px; border: 1px solid #b8bcc2; display: flex; background: #fff; }
.shapes { display: grid; grid-template-columns: repeat(6, 20px); grid-auto-rows: 19.500px; padding-left: 2px; flex: 1; align-items: center; }
.shapes svg { width: 16px; height: 14px; fill: none; stroke: #2c4573; }
.shapes text { stroke: none; }
.shapes .fl { fill: url(#blueFill); stroke: #44688f; }
.shapes .box { fill: #eaf1fa; stroke: #3d5f92; stroke-width: 1.300; }
.gscroll { width: 15px; border-left: 1px solid #cbced3; display: grid; grid-template-rows: 1fr 1fr 1fr; }
.gscroll span { display: flex; align-items: center; justify-content: center; border-bottom: 1px solid #cbced3; color: #555; }
.gscroll .dim svg { transform: rotate(180deg); color: #b8babd; }
.gscroll .more { border-bottom: 0; } .gscroll .more svg { border-top: 1px solid #555; padding-top: 2px; height: 6px; }
.arrange { width: 46px; margin-left: 2px; } .quick { width: 42px; margin-left: 1px; }
.g-draw .stack { margin-left: 2px; }
.g-edit .stack { margin-left: 8px; }
.g-edit .stack > div > span { margin-left: 4px; }
.g-acro .big { width: 103px; }

/* Work area */
.work { flex: 1; display: flex; margin-top: 2px; min-height: 0; background: #f1f3f4; }
.pane { width: 291px; border-right: 1px solid #8c9197; display: flex; flex-direction: column; background: linear-gradient(#cdd1d5, #c4c7cc 30%, #bbbec4); }
.ptabs { height: 22px; flex: none; display: flex; align-items: center; border-bottom: 1px solid #8f949a; font-size: 12px; background: linear-gradient(#c2c6ca, #adb3b8); }
.ptabs span { width: 63px; text-align: center; height: 21px; line-height: 22px; border-right: 1px solid #8f949a; color: #55595f; }
.ptabs .on { background: #d8dcdf; height: 22px; color: #33363b; margin-bottom: -1px; }
.ptabs svg { margin: 2px 0 0 149px; }
.plist { flex: 1; display: flex; min-height: 0; overflow: hidden; }
.thumbs { flex: 1; list-style: none; padding-top: 4px; }
.thumbs li { display: flex; height: 194px; margin: 0 1px 3px 3px; padding: 5px 0 0 1px; }
.thumbs li > b { width: 20px; padding-right: 4px; text-align: right; font: bold 13px/20px "Open Sans", sans-serif; color: #3c3f45; letter-spacing: -.3px; }
.thumbs li.sel { border: 1px solid #f0c548; border-radius: 3px; padding: 4px 0 0; background: linear-gradient(#fdeaa8, #fbd56e 40%, #fff7d8); }
.thumb { width: 243px; height: 183px; overflow: hidden; background: #fff; box-shadow: 0 0 0 1px #8b9098, 2px 2px 4px #7b8089; flex: none; }
.thumb .slide { transform: scale(.2531); transform-origin: 0 0; box-shadow: none; --line: 4px; --ink: #111; --arrow: 5; -webkit-text-stroke: .7px #000; }
.thumb .pair b { -webkit-text-stroke: 0; }
.vscroll { width: 16px; background: linear-gradient(90deg, #cfd5dd, #dde1e9 40%); display: flex; flex-direction: column; align-items: center; padding: 5px 1px 6px 0; }
.pane .vscroll svg:last-child { margin-top: auto; }
.knob { width: 14px; height: 56px; margin-top: 119px; border: 1px solid #8b919b; border-radius: 2px; background: repeating-linear-gradient(#7f858e 0 1px, transparent 1px 3px) 50% 50% / 8px 10px no-repeat, linear-gradient(90deg, #f3f5f8, #ccd2da); }
.editor { flex: 1; margin-left: 4px; margin-right: 4px; display: flex; flex-direction: column; border-left: 1px solid #8c9197; }
.canvas-row { height: 830px; display: flex; border-bottom: 1px solid #7f858c; flex: none; }
.canvas { flex: 1; background: linear-gradient(#cdd0d5, #bbbec3); padding: 55px 0 0 322px; }
.wide { padding-bottom: 0; padding-top: 6px; }
.wide .knob { height: 16px; margin-top: 160px; background-size: 8px 7px, auto; }
.wide > svg:nth-of-type(2) { margin-top: 581px; }
.jump { margin-top: 4px; border-top: 1px solid #fff; width: 15px; flex: 1; display: flex; flex-direction: column; align-items: center; gap: 6px; padding-top: 5px; }
.notes-row { flex: 1; display: flex; margin-top: 4px; border-top: 1px solid #7f858c; }
.notes { flex: 1; background: #fff; font: 16.500px/30px Lato, sans-serif; letter-spacing: -.25px; color: #000; padding-left: 10px; }
.faded { justify-content: space-between; }

/* Slide */
.slide { --line: 2px; --ink: #333; width: 960px; height: 720px; background: #fff; box-shadow: 0 0 0 1px #a4a9b1, 3px 3px 8px 2px #888c92; font-family: Lato, "Open Sans", sans-serif; color: #000; letter-spacing: 0; padding: 16px 7px 0 16px; }
.s-head { display: flex; height: 59px; }
.s-head h2 { width: 584px; flex: none; padding-left: 45px; font-size: 38.500px; line-height: 40px; letter-spacing: .48px; white-space: nowrap; }
.btn { width: 169px; height: 43px; background: #7f7f7f; border: 1px solid #000; font-size: 24px; line-height: 40px; text-align: center; margin-right: 15px; outline: calc(var(--line) - 2px) solid #000; }
.btn.lower { margin: 1px 0 0; height: 44px; }
.s-nav { display: grid; grid-template-columns: 96px 104px 96px 104px 104px 104px 112px 96px 112px; height: 49px; }
.s-nav span { background: #7f7f7f; outline: var(--line) solid var(--ink); outline-offset: calc(var(--line) / -2); font-size: 13.300px; line-height: 17px; text-align: center; padding-top: 5px; white-space: nowrap; }
.slide .on { background: #92d050; }
.s-body { display: flex; margin-top: 25px; }
.s-side { width: 184px; display: grid; grid-template-rows: 51px 45px 46px 45px 79px 80px 64px 65px 64px; }
.s-side span, .words span, .bn-side span, .bn-pick span, .bn-list span { background: #a5a5a5; outline: var(--line) solid var(--ink); outline-offset: calc(var(--line) / -2); text-align: center; }
.s-side span { font-size: 21.800px; line-height: 29px; padding-top: 4px; }
.s-main { margin-left: 38px; width: 307px; }
.s-main p { margin: 38px 0 0 36px; font-size: 14.700px; line-height: 24px; white-space: nowrap; }
.s-main .pair { margin: 5px 0 8px 59px; }
.pair { display: grid; grid-template-columns: 87px 87px; grid-auto-rows: 36px; gap: 1px; width: 175px; }
.pair b { background: #4f81bd; color: #fff; text-align: center; font-size: 22px; line-height: 36px; box-shadow: 0 0 0 1px #b8cce4; }
.words { display: grid; grid-template-columns: 153.500px 153.500px; grid-template-rows: 34px repeat(7, 41.140px) 55px; margin-left: -.6px; }
.words span { font-size: 16.800px; line-height: 22px; padding-top: 4px; position: relative; white-space: nowrap; }
.words .wh, .words .add { padding-top: 5px; }
.words .add { letter-spacing: .35px; }
.words svg { position: absolute; width: 12px; height: 31px; left: 139px; z-index: 1; }
.a1 { top: 9px; } .a2 { top: 0; } .a3 { top: 5px; } .a4 { top: 0; } .a5 { top: 8px; }
.words .a6 { left: 141px; top: 6px; } .words .a7 { left: 141px; top: 4px; }

/* Thumbnail-only slides */
.divider h3 { text-align: center; font-size: 54px; line-height: 56px; margin-top: 47px; letter-spacing: .4px; margin-left: -14px; }
.thumb h2 { font-size: 40px; padding-left: 42px; line-height: 42px; }
.shifted { padding-left: 24px; }
.bn { margin-top: 37px; font-size: 17.500px; line-height: 23px; --line: 4px; }
.bn-side { width: 185px; margin-left: 26px; display: grid; grid-template-rows: 61px 59px 59px 59px 59px 56px 54px 55px 56px; }
.bn-side span { -webkit-text-stroke: 1px #000; padding-top: 3px; line-height: 23px; }
.bn-pick { display: grid; grid-template-rows: 56px 56px; width: 184px; }
.bn-pick span { padding: 4px 20px 0; }
.bn-creating .bn-mid { margin: 37px 0 0 44px; }
.bn-editing .bn-mid { margin: 36px 0 0 22px; width: 340px; flex: none; }
.bn-drag { margin: 8px 0 4px 57px; white-space: nowrap; }
.bn-editing .pair { margin-left: 113px; }
.bn-list { display: grid; grid-template-rows: repeat(5, 62px); width: 183px; margin: 4px 0 0 107px; }
.bn-list span { padding-top: 28px; position: relative; }
.bn-list svg { position: absolute; width: 12px; height: 31px; right: 10px; top: 18px; }
.bn-form { width: 340px; text-align: center; margin: 54px 0 0 54px; flex: none; }
.bn-editing .bn-form { margin: 138px 0 0 10px; }
.bn-form p { font-size: 18px; letter-spacing: .8px; }
.bn-form h4 { background: #a5a5a5; border: 4px solid #000; font-size: 15px; line-height: 20px; }
.rowsf { display: grid; grid-template-columns: 95px 205px; grid-template-rows: 41px 37px 41px 38px 32px 71px 49px; width: 300px; margin-left: 21px; font-size: 12.500px; line-height: 15px; }
.bn-editing .rowsf { grid-template-rows: 43px 39px 40px 37px 30px 57px; }
.rowsf > * { outline: 4px solid #000; outline-offset: -2px; padding: 3px 1px; }
.rowsf > div { display: flex; padding: 6px 8px; }
.rowsf em, .rowsf q { font-style: normal; flex: 1; border: 3px solid #000; font-size: 11px; line-height: 13px; white-space: nowrap; }
.rowsf em { background: #a5a5a5; flex: 0 0 82px; -webkit-text-stroke-width: .3px; } .rowsf q::before, .rowsf q::after { content: none; }
.rowsf .area q { border-color: #bbb; } .rowsf .end q { flex: 0 0 75px; } .rowsf .end em { flex: 1; }
.rowsf .end { padding-bottom: 16px; }

/* Status bar */
.status { height: 23px; flex: none; display: flex; align-items: center; border-top: 1px solid #8c9197; border-bottom: 2px solid #4b5564; background: linear-gradient(#e2e4e6, #cfd1d4 55%, #b8babd); font-size: 11.500px; color: #3c3f44; }
.status > span { border-right: 1px solid #9a9ea4; height: 18px; line-height: 18px; }
.st1 { width: 87px; padding-left: 8px; } .st2 { width: 95px; padding-left: 9px; }
.status .st3 { width: 40px; padding: 2px 0 0 8px; border: 0; } .st4 { width: 77px; }
.views { margin-left: auto; display: flex; align-items: center; border-left: 1px solid #9a9ea4; padding: 0 5px 0 4px; height: 20px; }
.views > svg { margin-left: 7px; }
.cur { width: 19px; height: 18px; border: 1px solid #c08a2c; border-radius: 2px; background: linear-gradient(#fbd26a, #ffe883); display: flex; align-items: center; justify-content: center; margin-right: -3px; }
.pct { margin-left: 11px; width: 29px; }
.views .zoomer { margin-left: 7px; }

/* Taskbar */
.taskbar { height: 39px; flex: none; display: flex; align-items: center; gap: 2px; background: linear-gradient(90deg, #8294ac 0 52px, #a6c0dd 64px 1632px, #8294ac 1665px); }
.orb { margin: 0 11px 0 8px; }
.tb { width: 60px; height: 38px; border: 1px solid #5f7087; border-radius: 3px; box-shadow: inset 0 0 0 1px #dde7f2; background: linear-gradient(120deg, #c0d1e5 40%, #aec4de 60%); display: flex; align-items: center; justify-content: center; }
.tb.front { background: linear-gradient(120deg, #eaf0f7 40%, #d4e0ee); }
.tb.front svg { margin-right: 2px; }
.tray { margin-left: auto; display: flex; align-items: center; color: #fff; height: 39px; font-size: 11.500px; }
.en { margin-bottom: 6px; }
.t-help { margin: 0 0 6px 7px; } .t-win { margin-left: 7px; margin-bottom: 5px; } .t-up { margin-left: 11px; } .t-flag { margin-left: 12px; } .t-sig { margin-left: 9px; } .t-snd { margin-left: 7px; }
.clock { width: 62px; margin-left: 11px; margin-right: 5px; display: flex; flex-direction: column; line-height: 17px; text-align: center; font-size: 12px; }
.peek { width: 14px; height: 39px; border: 1px solid #4d5c72; background: linear-gradient(135deg, #94a5bc, #5f7089 55%, #7f90a8); }
```
